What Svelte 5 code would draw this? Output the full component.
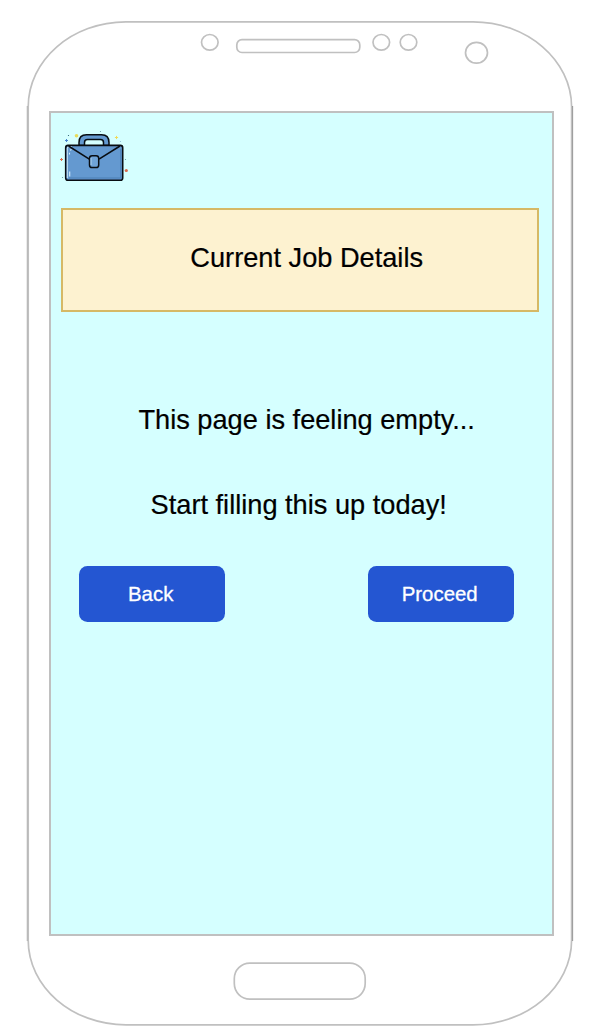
<script>
  const sparks = [
    { x: 12.5, y: 16.5, r: 1.5, c: '#4b86cf', plus: true },
    { x: 62.5, y: 13.5, r: 1.6, c: '#f0d95a', plus: true },
    { x: 7.5, y: 35.5, r: 1.5, c: '#e06a4a', plus: true },
    { x: 22.5, y: 11.7, r: 1.8, c: '#e8dc5c' },
    { x: 72.3, y: 46.5, r: 1.6, c: '#d9694c' },
    { x: 14.5, y: 11.5, r: 0.6, c: '#24566a' },
    { x: 46.5, y: 7.5, r: 0.6, c: '#68979f' },
    { x: 71.5, y: 35.5, r: 0.6, c: '#68979f' },
    { x: 8.5, y: 53.5, r: 0.6, c: '#68979f' },
    { x: 66.5, y: 17.5, r: 0.6, c: '#8eb9d4' }
  ];
</script>

<main class="phone">
  <svg class="shell" viewBox="0 0 594 1034" aria-hidden="true">
    <path d="M27.3 106V941" stroke="#999" stroke-width="1" />
    <path d="M572.6 106V941" stroke="#777" stroke-width="1" />
    <path d="M28.2 107C28.2 60 72 21.8 126 21.8H473C527 21.8 571.6 60 571.6 107V940C571.6 987 527 1024.8 473 1024.8H126C72 1024.8 28.2 987 28.2 940Z" />
    <ellipse cx="209.8" cy="42.3" rx="8.3" ry="7.8" />
    <rect x="236.8" y="39.7" width="123" height="12.8" rx="5.2" />
    <ellipse cx="381.3" cy="42.3" rx="8.3" ry="7.8" />
    <ellipse cx="408.5" cy="42.3" rx="8.3" ry="7.8" />
    <ellipse cx="476.5" cy="52.7" rx="11" ry="10.4" />
    <rect x="234.3" y="963.1" width="130.9" height="36" rx="15.5" />
  </svg>

  <section class="screen">
    <svg class="logo" width="80" height="64" viewBox="0 0 80 64" aria-label="Briefcase">
      {#each sparks as s}
        {#if s.plus}
          <path d="M{s.x - s.r} {s.y}H{s.x + s.r}M{s.x} {s.y - s.r}V{s.y + s.r}" stroke={s.c} stroke-width="1" />
        {:else}
          <circle cx={s.x} cy={s.y} r={s.r} fill={s.c} />
        {/if}
      {/each}
      <path d="M25 21.5V18.5Q25 10.8 32.5 10.8H47.5Q55 10.8 55 18.5V21.5H49.5V18.5Q49.5 15.5 46.5 15.5H33.5Q30.5 15.5 30.5 18.5V21.5Z" fill="#6499d0" stroke="#080d12" stroke-width="1.5" />
      <rect x="11.7" y="21.4" width="57" height="34.8" rx="2.3" fill="#6499d0" stroke="#080d12" stroke-width="1.6" />
      <path d="M13.3 54V24Q13.3 22.8 15 22.8H18" fill="none" stroke="#cbe6f7" stroke-width="1" />
      <path d="M15.7 47.5V52.5M16 26.2L17.5 25.5M15.5 28.8V30.5" fill="none" stroke="#d5effb" stroke-width="1.1" />
      <path d="M66.8 25V54H15" fill="none" stroke="#4a7eb5" stroke-width="1" />
      <path d="M14.5 22L35.3 35.2M66 22L45 35.2" stroke="#080d12" stroke-width="1.5" />
      <rect x="35.5" y="31.7" width="9.2" height="11.8" rx="2.6" fill="#6fa3d7" stroke="#080d12" stroke-width="1.5" />
      <path d="M37.1 34V41" stroke="#a6cdeb" stroke-width="1" />
    </svg>
    <h1>Current Job Details</h1>
    <p class="empty">This page is feeling empty...</p>
    <p class="start">Start filling this up today!</p>
    <div class="actions">
      <button>Back</button>
      <button>Proceed</button>
    </div>
  </section>
</main>

<style>
  :global(body) {
    background: #fff;
  }
  .phone {
    position: relative;
    box-sizing: border-box;
    width: 594px;
    height: 1034px;
    padding: 111px 0 0 48.7px;
    overflow: hidden;
    font-family: 'Liberation Sans', Arial, sans-serif;
    color: #000;
  }
  .shell {
    position: absolute;
    inset: 0;
    width: 594px;
    height: 1034px;
    fill: none;
    stroke: #c0c0c0;
    stroke-width: 1.7;
  }
  .screen {
    position: relative;
    box-sizing: border-box;
    width: 505px;
    height: 825px;
    padding: 11px 13px 0 10px;
    border: 2px solid #c0c0c0;
    background: #d5ffff;
  }
  .logo {
    display: block;
    margin-left: -7px;
  }
  h1 {
    box-sizing: border-box;
    width: 478px;
    height: 104px;
    margin: 20px 0 0;
    padding-left: 14px;
    border: 2px solid #d6b965;
    background: #fdf2d0;
    font-size: 27.2px;
    font-weight: 400;
    line-height: 95px;
    text-align: center;
    -webkit-text-stroke: 0.2px #000;
  }
  p {
    margin: 0;
    font-size: 27.2px;
    line-height: 34px;
    text-align: center;
    white-space: nowrap;
    -webkit-text-stroke: 0.2px #000;
  }
  .empty {
    margin-top: 91px;
    padding-left: 14px;
  }
  .start {
    margin-top: 51px;
    padding-right: 2px;
  }
  .actions {
    display: flex;
    justify-content: space-between;
    margin: 44px 25px 0 18px;
  }
  button {
    width: 146px;
    height: 56px;
    padding: 0 2px 0 0;
    border: 0;
    border-radius: 8.5px;
    background: #2456d2;
    color: #fff;
    font: 20.4px 'Liberation Sans', Arial, sans-serif;
    -webkit-text-stroke: 0.3px #fff;
  }
</style>
